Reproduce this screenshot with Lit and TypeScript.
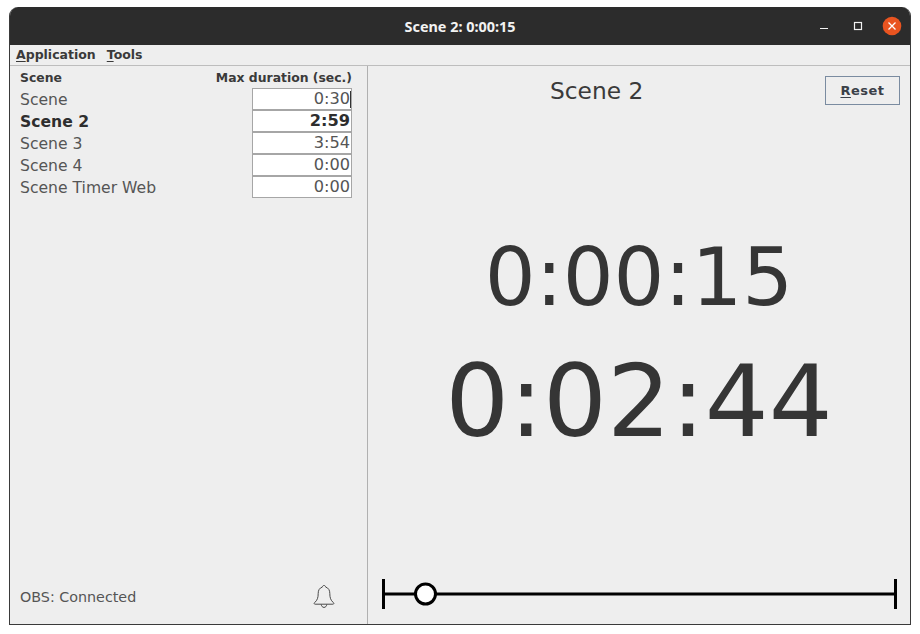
import { LitElement, html, css } from "lit";
import { customElement } from "lit/decorators.js";

const rows = [
  { name: "Scene", value: "0:30", caret: true },
  { name: "Scene 2", value: "2:59", bold: true },
  { name: "Scene 3", value: "3:54" },
  { name: "Scene 4", value: "0:00" },
  { name: "Scene Timer Web", value: "0:00" },
];

@customElement("app-root")
export class AppRoot extends LitElement {
  static styles = css`
    :host {
      display: block;
      width: 920px;
      height: 634px;
      background: #fff;
      padding: 7px 9px 9px 9px;
      box-sizing: border-box;
      font-family: "DejaVu Sans", sans-serif;
      color: #3c3c3c;
    }
    .window {
      height: 618px;
      width: 902px;
      display: flex;
      flex-direction: column;
      border-radius: 9px 9px 0 0;
      overflow: hidden;
      background: #eeeeee;
      border: 1px solid #3a3a3a;
      border-top: none;
      box-sizing: border-box;
    }
    .titlebar {
      height: 38px;
      flex: none;
      background: #2c2c2c;
      color: #f2f2f2;
      display: flex;
      align-items: center;
      justify-content: center;
      position: relative;
      font-family: "Noto Sans", sans-serif;
      font-size: 14.4px;
      font-weight: 700;
    }
    .controls {
      position: absolute;
      top: 0;
      right: 0;
      height: 38px;
    }
    .menu {
      flex: none;
      display: flex;
      align-items: center;
      gap: 11px;
      padding: 0 0 2px 6px;
      box-sizing: content-box;
      height: 18px;
      font-size: 12.5px;
      font-weight: 700;
      color: #3a3a3a;
      border-bottom: 1px solid #bdbdbd;
    }
    u {
      text-underline-offset: 2px;
    }
    .body {
      flex: 1;
      display: flex;
      min-height: 0;
    }
    .left {
      width: 358px;
      flex: none;
      box-sizing: border-box;
      border-right: 1px solid #b0b0b0;
      padding: 4px 15px 0 10px;
      display: flex;
      flex-direction: column;
    }
    .head {
      display: flex;
      justify-content: space-between;
      font-size: 12.4px;
      font-weight: 700;
      height: 18px;
      line-height: 15px;
      color: #3a3a3a;
    }
    .row {
      display: flex;
      justify-content: space-between;
      align-items: center;
      height: 22px;
      font-size: 15.6px;
      color: #555555;
    }
    .row span {
      padding-top: 2px;
    }
    .row.bold {
      font-weight: 700;
      color: #2e2e2e;
    }
    .field {
      width: 100px;
      height: 22px;
      box-sizing: border-box;
      border: 1px solid #a6a6a6;
      background: #fff;
      text-align: right;
      padding-right: 1px;
      font-size: 16.2px;
      line-height: 20px;
      position: relative;
    }
    .caret {
      position: absolute;
      right: 0;
      top: 2px;
      width: 1px;
      height: 17px;
      background: #333;
    }
    .spacer {
      flex: 1;
    }
    .status {
      height: 58px;
      display: flex;
      justify-content: space-between;
      align-items: flex-start;
      font-size: 14.3px;
      color: #555555;
      padding-top: 18px;
      box-sizing: border-box;
    }
    .status span {
      line-height: 20px;
      margin-top: 3px;
    }
    .bell {
      margin: 0 16px 0 0;
      display: block;
    }
    .right {
      flex: 1;
      min-width: 0;
      display: flex;
      flex-direction: column;
      padding: 10px 10px 0 0;
      box-sizing: border-box;
    }
    .top {
      display: grid;
      grid-template-columns: 1fr auto;
      height: 30px;
    }
    .scene-title {
      font-size: 23.3px;
      line-height: 29px;
      padding-left: 182px;
      color: #3a3a3a;
    }
    .reset {
      width: 75px;
      height: 29px;
      box-sizing: border-box;
      border: 1px solid #7a8ba0;
      background: #eeeeee;
      color: #3a4048;
      font: 700 13px "DejaVu Sans", sans-serif;
      padding: 0;
      letter-spacing: 0.5px;
    }
    .times {
      flex: 1;
      display: flex;
      flex-direction: column;
      align-items: center;
      padding: 119px 0 0 10px;
      color: #353535;
    }
    .t1 {
      font-size: 80px;
      line-height: 105px;
    }
    .t2 {
      font-size: 100.5px;
      line-height: 130px;
      margin-top: 7px;
    }
    .slider {
      display: block;
      flex: none;
      margin-bottom: 15px;
    }
  `;

  render() {
    return html`
      <div class="window">
        <div class="titlebar">
          Scene 2: 0:00:15
          <svg class="controls" width="100" height="38" viewBox="0 0 100 38">
            <rect x="10" y="21" width="8" height="1" fill="#f2f2f2" />
            <rect x="44.500" y="15.500" width="7" height="7" fill="none" stroke="#f2f2f2" stroke-width="1.200" />
            <circle cx="82" cy="19" r="9.300" fill="#e95420" />
            <path d="M78.500 15.500l7 7M85.500 15.500l-7 7" stroke="#fff" stroke-width="1.300" fill="none" />
          </svg>
        </div>
        <div class="menu">
          <span><u>A</u>pplication</span>
          <span><u>T</u>ools</span>
        </div>
        <div class="body">
          <div class="left">
            <div class="head"><span>Scene</span><span>Max duration (sec.)</span></div>
            ${rows.map(
              (r) => html`<div class="row ${r.bold ? "bold" : ""}">
                <span>${r.name}</span>
                <div class="field">${r.value}${r.caret ? html`<i class="caret"></i>` : ""}</div>
              </div>`
            )}
            <div class="spacer"></div>
            <div class="status">
              <span>OBS: Connected</span>
              <svg class="bell" width="24" height="26" viewBox="0 0 24 26" fill="none" stroke="#4a4a4a" stroke-width="1">
                <path d="M12 1.500c-1 0-1.600.7-1.700 1.600C7.400 4 6.200 6.400 6.200 9.300c0 4.400-.9 7-3.500 9.200-.9.800-.6 1.700.4 1.700h17.800c1 0 1.300-.9.400-1.700-2.600-2.200-3.500-4.800-3.500-9.200 0-2.900-1.200-5.300-4.100-6.200-.1-.9-.7-1.600-1.700-1.600z" />
                <path d="M9.200 20.400c.3 2 1.400 3 2.800 3s2.500-1 2.800-3" />
              </svg>
            </div>
          </div>
          <div class="right">
            <div class="top">
              <div class="scene-title">Scene 2</div>
              <button class="reset"><u>R</u>eset</button>
            </div>
            <div class="times">
              <div class="t1">0:00:15</div>
              <div class="t2">0:02:44</div>
            </div>
            <svg class="slider" width="532" height="30" viewBox="0 0 532 30">
              <path d="M15.500 0v30M527.500 0v30" stroke="#000" stroke-width="3" fill="none" />
              <path d="M15.500 15h512" stroke="#000" stroke-width="3" fill="none" />
              <circle cx="57.500" cy="15" r="10" fill="#fff" stroke="#000" stroke-width="3" />
            </svg>
          </div>
        </div>
      </div>
    `;
  }
}
